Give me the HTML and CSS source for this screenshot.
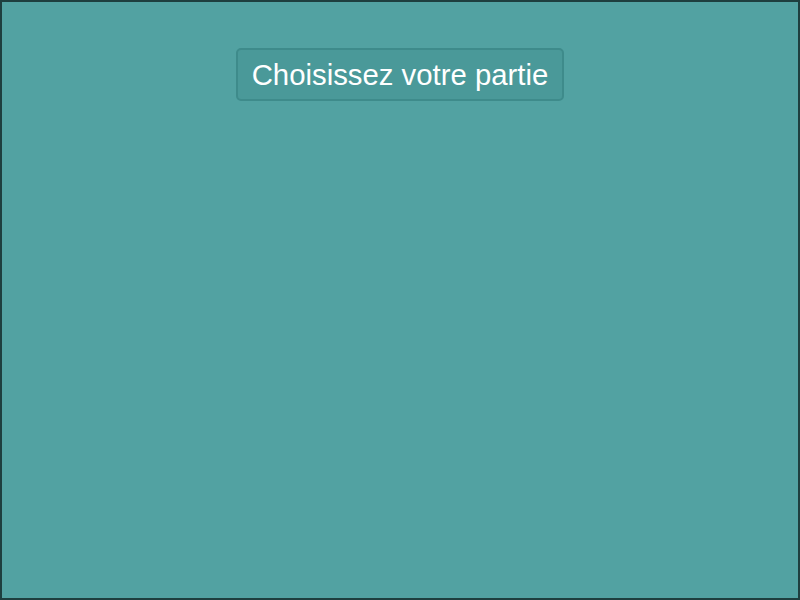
FILE: index.html
```html
<!DOCTYPE html>
<html lang="fr">
<head>
<meta charset="utf-8">
<title>Choisissez votre partie</title>
<link rel="stylesheet" href="styles.css">
</head>
<body>
<div class="screen">
  <div class="title">Choisissez votre partie</div>
</div>
</body>
</html>
```
FILE: styles.css
```css
html, body {
  margin: 0;
  padding: 0;
}
body {
  font-family: "Liberation Sans", Arial, sans-serif;
}
.screen {
  box-sizing: border-box;
  width: 800px;
  height: 600px;
  background: #52a2a2;
  border: 2px solid #1e3f3f;
  display: flex;
  flex-direction: column;
  align-items: center;
  padding-top: 46px;
}
.title {
  background: #4a9999;
  border: 2px solid #3e8b8b;
  border-radius: 5px;
  color: #ffffff;
  font-size: 29.33px;
  line-height: 33px;
  padding: 8px 14px;
}
```
